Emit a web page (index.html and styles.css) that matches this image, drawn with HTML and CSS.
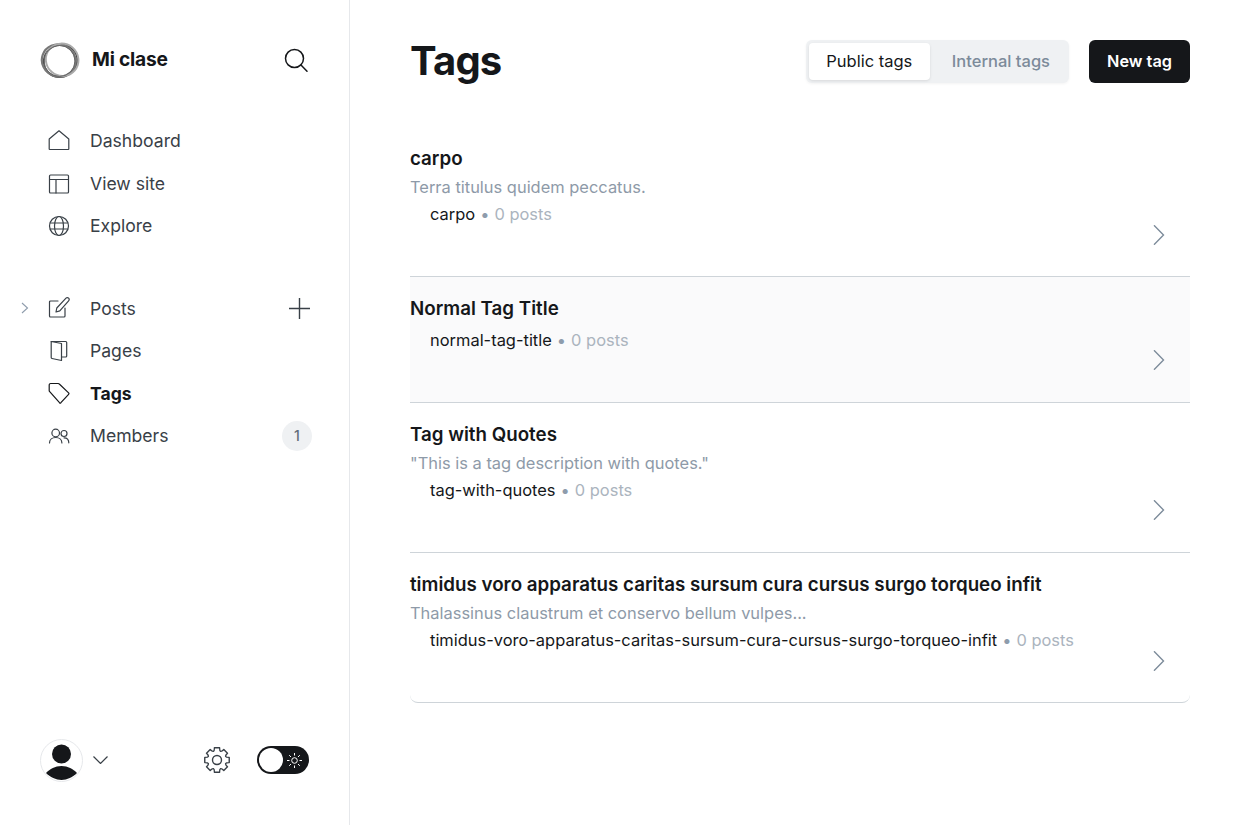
FILE: index.html
```html
<!DOCTYPE html>
<html lang="en">
<head>
<meta charset="utf-8">
<title>Tags</title>
<link rel="stylesheet" href="styles.css">
</head>
<body>
<div class="app">
  <aside class="sidebar">
    <div class="brand">
      <div class="brand-left">
        <svg class="logo" width="40" height="40" viewBox="0 0 40 40" fill="none">
          <ellipse cx="20" cy="21" rx="17" ry="16" stroke="#444" stroke-width="1.800" transform="rotate(-30 20 20)"/>
          <ellipse cx="19" cy="21" rx="17" ry="16" stroke="#777" stroke-width="2.200" transform="rotate(20 20 20)"/>
          <ellipse cx="21.500" cy="18.500" rx="16.500" ry="16" stroke="#aaa" stroke-width="2" transform="rotate(40 20 20)"/>
          <circle cx="19.500" cy="21" r="15.500" stroke="#666" stroke-width="1"/>
        </svg>
        <span class="brand-name">Mi clase</span>
      </div>
      <svg class="search" width="24" height="24" viewBox="0 0 24 24" fill="none" stroke="#15171a" stroke-width="1.5" stroke-linecap="round"><circle cx="10.500" cy="10.500" r="9"/><path d="M17 17l6 6.200"/></svg>
    </div>

    <nav class="nav">
      <a class="nav-item"><svg class="ico" viewBox="0 0 22 22"><path d="M1.200 19V9L11 .8l9.800 8.200V19a.5.500 0 0 1-.5.500H1.700a.5.500 0 0 1-.5-.5z"/></svg><span>Dashboard</span></a>
      <a class="nav-item"><svg class="ico" viewBox="0 0 22 22"><rect x="1.500" y="3" width="19" height="18" rx="1"/><path d="M1.500 7.500h19M8 7.500V21"/></svg><span>View site</span></a>
      <a class="nav-item"><svg class="ico" viewBox="0 0 22 22"><circle cx="11" cy="11" r="9.500"/><ellipse cx="11" cy="11" rx="4.500" ry="9.500"/><path d="M2.300 8h17.400M2.300 14h17.400"/></svg><span>Explore</span></a>
    </nav>

    <nav class="nav nav-second">
      <a class="nav-item">
        <svg class="caret" width="8" height="12" viewBox="0 0 8 12"><path d="M1 1l5.500 5L1 11"/></svg>
        <svg class="ico" viewBox="0 0 22 22"><path d="M17 11v8a1 1 0 0 1-1 1H2.500a1 1 0 0 1-1-1V5a1 1 0 0 1 1-1H10"/><path d="M8 15l.8-4L18 1.200a1.800 1.800 0 0 1 2.600 0 1.900 1.900 0 0 1 0 2.600L11.800 13.900z"/></svg>
        <span>Posts</span>
        <svg class="plus" width="21" height="21" viewBox="0 0 21 21"><path d="M10.500 0v21M0 10.500h21"/></svg>
      </a>
      <a class="nav-item"><svg class="ico" viewBox="0 0 22 22"><path d="M3.200 1.500l10.300 2v17l-9.500-2a1 1 0 0 1-.8-1z"/><path d="M3.200 1.500h14.500a1 1 0 0 1 1 1V16a1 1 0 0 1-1 1h-4.200"/></svg><span>Pages</span></a>
      <a class="nav-item active"><svg class="ico" viewBox="0 0 22 22"><path d="M1.200 3v5.500c0 .5.200.9.500 1.200l9.800 11a1 1 0 0 0 1.400 0l7.700-8.400a1 1 0 0 0 0-1.400L11.300 2a1.500 1.500 0 0 0-1.100-.5H2.700A1.500 1.500 0 0 0 1.200 3z"/></svg><span>Tags</span></a>
      <a class="nav-item"><svg class="ico" viewBox="0 0 22 22"><circle cx="7.700" cy="8" r="3.800"/><path d="M1.500 18c0-3.500 2.800-5.500 6.200-5.500s6.200 2 6.200 5.500"/><circle cx="16" cy="8.500" r="3"/><path d="M16 12.800c2.800 0 4.800 2 4.800 5"/></svg><span>Members</span><span class="badge">1</span></a>
    </nav>

    <div class="foot">
      <div class="user">
        <div class="avatar">
          <svg width="43" height="43" viewBox="0 0 43 43"><circle cx="21.500" cy="15" r="9.500" fill="#15171a"/><path d="M6 34C10 30 15 27 21.500 27S33 30 37 34C33 38 27 41 21.500 41S10 38 6 34z" fill="#15171a"/></svg>
        </div>
        <svg class="chev-down" width="15" height="8" viewBox="0 0 15 8"><path d="M.5.500l7 7 7-7"/></svg>
      </div>
      <div class="foot-right">
        <svg class="gear" width="26" height="26" viewBox="0 0 26 26"><path d="M10.400 .77L15.600 .77Q15.490 7 19.810 2.520L23.480 6.190Q19 10.510 25.230 10.400V15.600Q19 15.490 23.480 19.810L19.810 23.480Q15.490 19 15.600 25.230H10.400Q10.510 19 6.190 23.480L2.520 19.810Q7 15.490 .77 15.600V10.400Q7 10.510 2.520 6.190L6.190 2.520Q10.510 7 10.400 .77z"/><circle cx="13" cy="13" r="4.500"/></svg>
        <div class="toggle">
          <span class="knob"></span>
          <svg class="sun" width="15" height="15" viewBox="0 0 15 15"><circle cx="7.500" cy="7.500" r="2.800"/><path d="M7.500 0v2.500M7.500 12.500V15M0 7.500h2.500M12.500 7.500H15M2.200 2.200L4 4M11 11l1.800 1.800M2.200 12.800L4 11M11 4l1.800-1.800"/></svg>
        </div>
      </div>
    </div>
  </aside>

  <main class="main">
    <header class="head">
      <h1>Tags</h1>
      <div class="actions">
        <div class="tabs">
          <span class="tab on">Public tags</span>
          <span class="tab">Internal tags</span>
        </div>
        <button class="btn">New tag</button>
      </div>
    </header>

    <section class="list">
      <article class="row">
        <div class="row-body">
          <h3>carpo</h3>
          <p class="desc">Terra titulus quidem peccatus.</p>
          <p class="meta"><span class="slug">carpo</span><span class="dot">•</span><span class="count">0 posts</span></p>
        </div>
        <svg class="chev" width="12" height="20" viewBox="0 0 12 20"><path d="M1 .3l9.500 9.700L1 19.700"/></svg>
      </article>
      <article class="row short hover">
        <div class="row-body">
          <h3>Normal Tag Title</h3>
          <p class="meta"><span class="slug">normal-tag-title</span><span class="dot">•</span><span class="count">0 posts</span></p>
        </div>
        <svg class="chev" width="12" height="20" viewBox="0 0 12 20"><path d="M1 .3l9.500 9.700L1 19.700"/></svg>
      </article>
      <article class="row">
        <div class="row-body">
          <h3>Tag with Quotes</h3>
          <p class="desc">"This is a tag description with quotes."</p>
          <p class="meta"><span class="slug">tag-with-quotes</span><span class="dot">•</span><span class="count">0 posts</span></p>
        </div>
        <svg class="chev" width="12" height="20" viewBox="0 0 12 20"><path d="M1 .3l9.500 9.700L1 19.700"/></svg>
      </article>
      <article class="row last">
        <div class="row-body">
          <h3>timidus voro apparatus caritas sursum cura cursus surgo torqueo infit</h3>
          <p class="desc">Thalassinus claustrum et conservo bellum vulpes...</p>
          <p class="meta"><span class="slug">timidus-voro-apparatus-caritas-sursum-cura-cursus-surgo-torqueo-infit</span><span class="dot">•</span><span class="count">0 posts</span></p>
        </div>
        <svg class="chev" width="12" height="20" viewBox="0 0 12 20"><path d="M1 .3l9.500 9.700L1 19.700"/></svg>
      </article>
    </section>
  </main>
</div>
</body>
</html>
```
FILE: styles.css
```css
* { box-sizing: border-box; }
html, body { margin: 0; height: 100%; }
body {
  font-family: Inter, "Liberation Sans", sans-serif;
  color: #15171a;
  background: #fff;
  overflow: hidden;
}
.app { display: flex; height: 825px; }

.sidebar {
  width: 350px;
  flex: none;
  border-right: 1px solid #e6e8eb;
  display: flex;
  flex-direction: column;
  padding: 40px 37px 43.5px 40px;
}
.brand { display: flex; align-items: center; justify-content: space-between; height: 40px; }
.brand-left { display: flex; align-items: center; gap: 12px; }
.brand-name { font-size: 19.2px; font-weight: 700; letter-spacing: -0.2px; margin-bottom: 2px; }
.search { display: block; margin-right: 4px; }

.nav { margin-top: 39.5px; display: flex; flex-direction: column; margin-left: 8px; }
.nav-second { margin-top: 40px; }
.nav-item {
  position: relative;
  display: flex;
  align-items: center;
  height: 42.5px;
  gap: 20px;
  font-size: 17.6px;
  color: #394047;
}
.nav-item.active { color: #15171a; font-weight: 700; }
.ico { width: 22px; height: 22px; flex: none; fill: none; stroke: #394047; stroke-width: 1.2; stroke-linejoin: round; stroke-linecap: round; }
.active .ico { stroke: #15171a; }
.caret { position: absolute; left: -27px; top: 15px; fill: none; stroke: #8e9cac; stroke-width: 1.1; }
.plus { margin-left: auto; margin-right: 2px; fill: none; stroke: #394047; stroke-width: 1.4; }
.badge {
  margin-left: auto;
  width: 30px; height: 30px;
  border-radius: 50%;
  background: #eff1f3;
  color: #626d79;
  font-size: 14px;
  font-weight: 500;
  display: flex; align-items: center; justify-content: center;
}

.foot { margin-top: auto; margin-right: 3px; display: flex; align-items: center; justify-content: space-between; }
.user { display: flex; align-items: center; gap: 10px; }
.avatar {
  width: 43px; height: 43px;
  border-radius: 50%;
  border: 1px solid #e6e8eb;
  overflow: hidden;
  display: flex; align-items: center; justify-content: center;
}
.avatar svg { display: block; flex: none; }
.chev-down { fill: none; stroke: #394047; stroke-width: 1.2; }
.foot-right { display: flex; align-items: center; gap: 27px; }
.gear { fill: none; stroke: #394047; stroke-width: 1.4; stroke-linejoin: round; display: block; }
.toggle {
  position: relative;
  width: 52px; height: 28px;
  border-radius: 14px;
  background: #15171a;
  display: flex; align-items: center; justify-content: flex-end;
  padding-right: 7px;
}
.knob { position: absolute; left: 2px; top: 2px; width: 24px; height: 24px; border-radius: 50%; background: #fff; }
.sun { fill: none; stroke: #fff; stroke-width: 1; }

.main { flex: 1; min-width: 0; padding: 40px 60px 0; }
.head { display: flex; align-items: center; justify-content: space-between; height: 43px; }
h1 { margin: 0 0 2px; font-size: 40px; font-weight: 700; letter-spacing: -0.8px; line-height: 43px; }
.actions { display: flex; align-items: center; gap: 20px; }
.tabs {
  display: flex;
  height: 43px;
  padding: 3px;
  background: #eff1f3;
  border-radius: 6px;
  font-size: 16.5px;
  box-shadow: 0 1px 3px rgba(0,0,0,.05);
}
.tab {
  display: flex; align-items: center; justify-content: center;
  height: 37px;
  padding: 0 16px 2px 22px;
  color: #7c8b9a;
  font-weight: 500;
  border-radius: 4px;
}
.tab.on { width: 121px; background: #fff; color: #15171a; box-shadow: 0 1px 3px rgba(0,0,0,.1); font-weight: 400; padding: 0 0 2px; }
.btn {
  width: 101px;
  height: 43px;
  padding: 0 0 2px;
  border: 0;
  border-radius: 6px;
  background: #15171a;
  color: #fff;
  font: 600 16.3px Inter, sans-serif;
}

.list { margin-top: 44px; }
.row {
  display: flex;
  justify-content: space-between;
  height: 150px;
  padding-top: 20px;
  border-bottom: 1px solid #ced4d9;
}
.row.short { height: 126px; }
.row.hover { background: #fafafb; }
.row.last { border-radius: 0 0 8px 8px; }
h3 { margin: 0; font-size: 18.75px; font-weight: 600; line-height: 24px; }
.desc { margin: 4px 0 0; font-size: 16.45px; line-height: 24px; color: #8e9aa8; }
.meta { margin: 3px 0 0; padding-left: 20px; font-size: 16.45px; line-height: 24px; }
.short .meta { margin-top: 7px; }
.slug { color: #15171a; }
.dot { margin: 0 5px; color: #8e9cac; }
.count { color: #abb4be; }
.chev { align-self: flex-end; margin: 0 25px 32px 0; fill: none; stroke: #7c8b9a; stroke-width: 1.4; }
.row:first-child .chev, .row.last .chev { margin-bottom: 31px; }
```
